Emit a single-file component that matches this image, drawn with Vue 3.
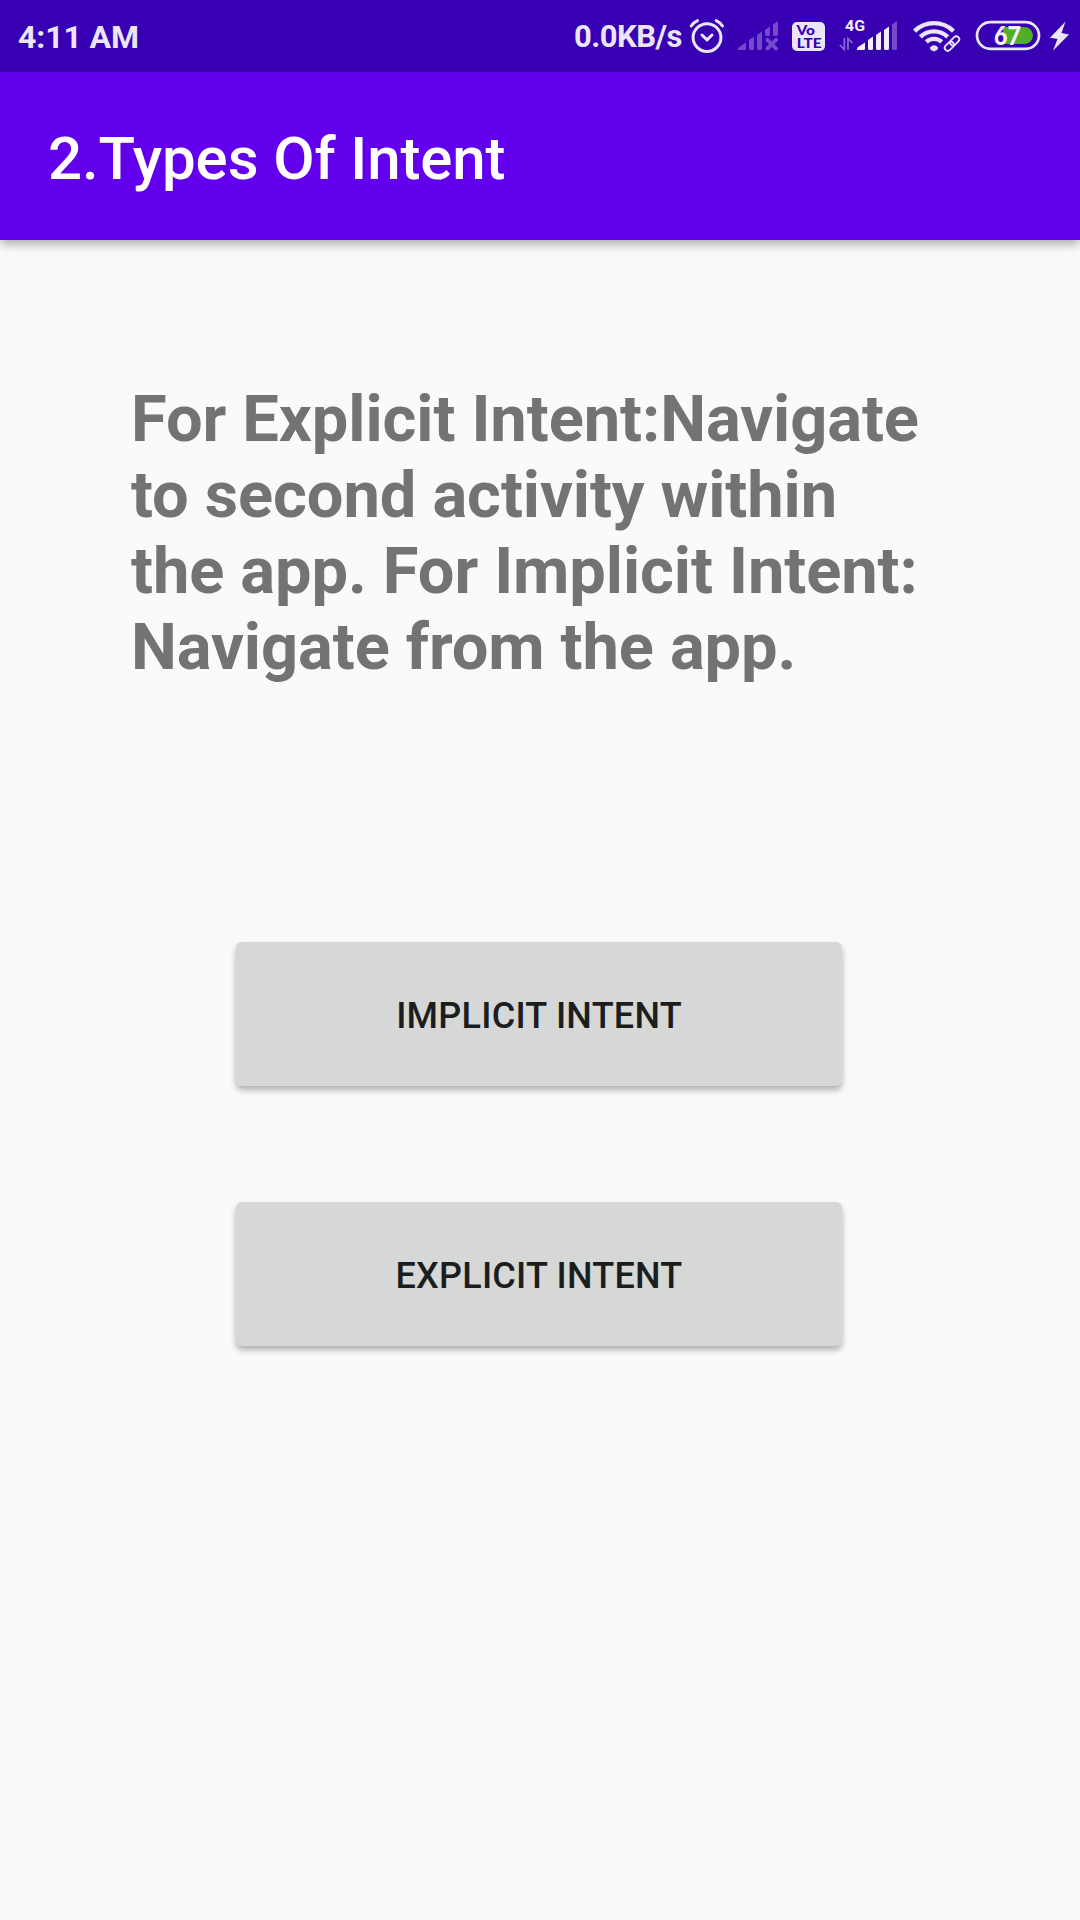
<script setup>
const lines = [
  'For Explicit Intent:Navigate',
  'to second activity within',
  'the app. For Implicit Intent:',
  'Navigate from the app.',
]
const buttons = ['IMPLICIT INTENT', 'EXPLICIT INTENT']
</script>

<template>
  <div class="screen">
    <header class="status">
      <span class="clock">4:11 AM</span>
      <span class="speed">0.0KB/s</span>
      <svg width="48" height="72" viewBox="685 0 48 72" fill="none" stroke="#ebe5f8" stroke-linecap="round" stroke-linejoin="round">
        <circle cx="707" cy="37.6" r="13.9" stroke-width="3" />
        <path d="M702 35l5 4.800 5-4.800" stroke-width="3" />
        <path d="M691.200 26q2.500-3.700 6.300-5.400M722.500 26q-2.500-3.700-6.300-5.400" stroke-width="3" />
      </svg>
      <svg width="55" height="72" viewBox="733 0 55 72" fill="#7449cb">
        <path d="M738 50v-1q0-1 1-2l7-4.500v6q0 1.500-1.500 1.500zM749 40l5-3.500v12q0 1.500-1.500 1.500h-2q-1.500 0-1.500-1.500zM757 35l5-3.500v17q0 1.500-1.500 1.500h-2q-1.500 0-1.500-1.500zM765 30l5-3.500v8q0 1.500-1.500 1.500h-2q-1.500 0-1.500-1.500zM773 24.500l5-3.500v13.500q0 1.500-1.500 1.500h-2q-1.500 0-1.500-1.500z" />
        <path d="M767.300 39.800l8.800 8.800M776.100 39.800l-8.800 8.800" fill="none" stroke="#7449cb" stroke-width="3.800" stroke-linecap="round" />
      </svg>
      <svg width="45" height="72" viewBox="788 0 45 72">
        <rect x="792" y="22" width="33" height="29" rx="5" fill="#ebe5f8" />
        <text class="lte" x="796.500" y="34.700" font-size="12.500" textLength="18.500" lengthAdjust="spacingAndGlyphs">Vo</text>
        <text class="lte" x="796.800" y="47.700" font-size="13.500" textLength="24.800" lengthAdjust="spacingAndGlyphs">LTE</text>
      </svg>
      <svg width="72" height="72" viewBox="833 0 72 72" fill="#f1edfb">
        <text class="net" x="845" y="31.300" font-size="15.500" textLength="20" lengthAdjust="spacingAndGlyphs">4G</text>
        <path d="M844.300 38v11.500l-4.500-4.500M848 50v-11.500l4.500 4.500" fill="none" stroke="#8c6ad5" stroke-width="1.700" />
        <path d="M857 50v-1q0-1 1-2l7-4.500v6q0 1.500-1.500 1.500zM868 40l5-3.500v12q0 1.500-1.500 1.500h-2q-1.500 0-1.500-1.500zM876 35l5-3.500v17q0 1.500-1.500 1.500h-2q-1.500 0-1.500-1.500zM884 30l5-3.500v22q0 1.500-1.500 1.500h-2q-1.500 0-1.500-1.500z" />
        <path fill="#7449cb" d="M892 24.500l5-3.500v27.500q0 1.500-1.500 1.500h-2q-1.500 0-1.500-1.500z" />
      </svg>
      <svg width="65" height="72" viewBox="905 0 65 72" fill="none" stroke="#ebe5f8">
        <path d="M914.500 31.100a28 28 0 0 1 39 0M920.300 36.900a20 20 0 0 1 27.400 0M926.300 41.900a11.500 11.500 0 0 1 15.400 0" stroke-width="4.300" />
        <path d="M930 47.500q4-4.500 8 0q.3 1.500-1 2.600l-3 1.400-3-1.400q-1.300-1.100-1-2.600z" fill="#ebe5f8" stroke="none" />
        <g stroke-width="1.800" transform="rotate(-45 952 43.600)">
          <rect x="943" y="40.600" width="10.500" height="6" rx="3" />
          <rect x="950.500" y="40.600" width="10.500" height="6" rx="3" />
        </g>
      </svg>
      <svg width="75" height="72" viewBox="970 0 75 72">
        <path d="M1003 27h21.500a8.500 8.500 0 0 1 0 17h-21.500z" fill="#52ae24" />
        <rect x="977" y="22.200" width="62" height="26.600" rx="13.300" fill="none" stroke="#ebe5f8" stroke-width="2.700" />
        <text class="level" x="994" y="44.800" textLength="27" lengthAdjust="spacingAndGlyphs">67</text>
      </svg>
      <svg width="35" height="72" viewBox="1045 0 35 72" fill="#ebe5f8">
        <path d="M1065.500 21.500L1050 37.800l7.500 1.200-4.500 11.700L1069 34.500l-7.500-1.500z" />
      </svg>
    </header>
    <div class="appbar"><h1>2.Types Of Intent</h1></div>
    <main>
      <p class="info"><span v-for="l in lines" :key="l">{{ l }}</span></p>
      <button v-for="b in buttons" :key="b" type="button">{{ b }}</button>
    </main>
  </div>
</template>

<style>
body { margin: 0; background: #fafafa; }
</style>

<style scoped>
.screen {
  display: flex;
  flex-direction: column;
  width: 1080px;
  height: 1920px;
  overflow: hidden;
  background: #fafafa;
  font-family: Roboto, "Noto Sans", sans-serif;
}
.status {
  display: flex;
  flex: none;
  height: 72px;
  background: #3700b3;
  color: #ebe5f8;
  line-height: 74px;
  font-weight: 700;
  white-space: nowrap;
}
.status svg { flex: none; display: block; }
.clock { flex: 1; padding-left: 18px; font-size: 32px; letter-spacing: -0.1px; }
.speed { width: 111px; font-size: 31px; letter-spacing: -0.5px; }
.lte { fill: #3700b3; font-family: Lato, sans-serif; font-weight: 900; }
.net { font-weight: 700; }
.level { fill: #f5f2fc; font-family: Lato, sans-serif; font-size: 26px; font-weight: 900; }
.appbar {
  display: flex;
  align-items: center;
  box-sizing: border-box;
  flex: none;
  height: 168px;
  padding: 5px 0 0 48px;
  background: #6200ee;
  box-shadow: 0 4px 10px rgba(0, 0, 0, 0.33);
}
h1 {
  margin: 0;
  color: #fff;
  font-size: 60px;
  font-weight: 500;
  line-height: 70px;
  letter-spacing: -0.12px;
}
main { display: flex; flex-direction: column; align-items: flex-start; }
.info {
  display: flex;
  flex-direction: column;
  margin: 141px 0 257px 131px;
  color: #737373;
  font-size: 65px;
  font-weight: 700;
  line-height: 76px;
  letter-spacing: -0.08px;
  white-space: nowrap;
}
button {
  box-sizing: border-box;
  width: 606px;
  height: 144px;
  margin: 0 0 116px 236px;
  padding: 4px 0 0;
  border: 0;
  border-radius: 6px;
  background: #d6d8d7;
  box-shadow: 0 4px 6px rgba(0, 0, 0, 0.3);
  color: #1c1d1d;
  font: 500 36px/42px Roboto, "Noto Sans", sans-serif;
  letter-spacing: 0.25px;
}
</style>
